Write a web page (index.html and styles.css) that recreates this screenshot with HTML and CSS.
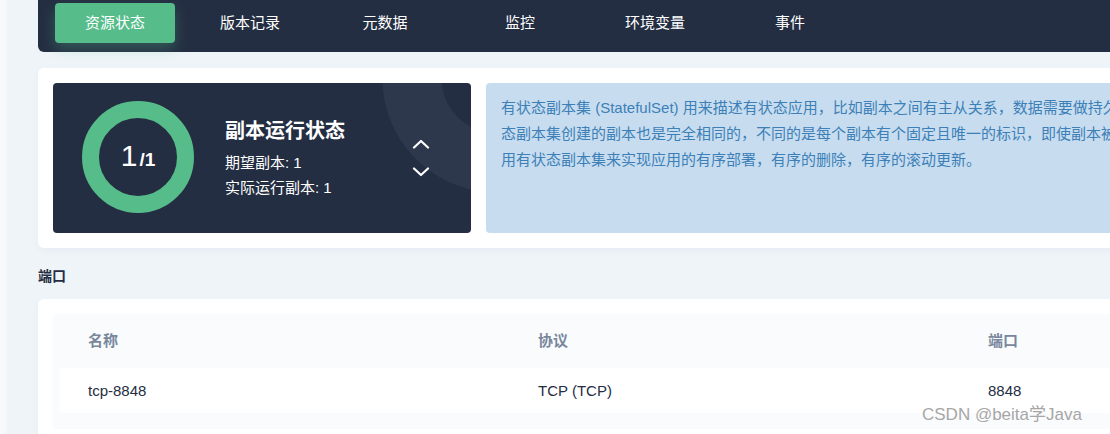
FILE: index.html
```html
<!DOCTYPE html>
<html lang="zh-CN">
<head>
    <meta charset="UTF-8">
    <meta name="viewport" content="width=device-width, initial-scale=1.0">
    <title>资源状态</title>
    <link rel="stylesheet" href="styles.css">
</head>
<body>
<div class="page">
    <nav class="tabs">
        <a class="tab active">资源状态</a>
        <a class="tab">版本记录</a>
        <a class="tab">元数据</a>
        <a class="tab">监控</a>
        <a class="tab">环境变量</a>
        <a class="tab">事件</a>
    </nav>

    <section class="card status-card">
        <div class="replica">
            <div class="ring">
                <span class="ring-cur">1</span><span class="ring-total">/1</span>
            </div>
            <div class="replica-info">
                <h3>副本运行状态</h3>
                <p>期望副本: 1</p>
                <p>实际运行副本: 1</p>
            </div>
            <div class="arrows">
                <svg width="18" height="10" viewBox="0 0 18 10"><path d="M2 8.5 L9 2 L16 8.5" fill="none" stroke="#fff" stroke-width="2.2" stroke-linecap="round" stroke-linejoin="round"/></svg>
                <svg width="18" height="10" viewBox="0 0 18 10"><path d="M2 1.5 L9 8 L16 1.5" fill="none" stroke="#fff" stroke-width="2.2" stroke-linecap="round" stroke-linejoin="round"/></svg>
            </div>
        </div>
        <div class="desc">
            <p>有状态副本集 (StatefulSet) 用来描述有状态应用，比如副本之间有主从关系，数据需要做持久化。与无状态副本集一样，有状</p>
            <p>态副本集创建的副本也是完全相同的，不同的是每个副本有个固定且唯一的标识，即使副本被重新调度了，标识也不会变化。您可以</p>
            <p>用有状态副本集来实现应用的有序部署，有序的删除，有序的滚动更新。</p>
        </div>
    </section>

    <h4 class="section-title">端口</h4>

    <section class="card ports-card">
        <div class="ports">
            <div class="row row-head">
                <span>名称</span>
                <span>协议</span>
                <span>端口</span>
            </div>
            <div class="row row-body">
                <span>tcp-8848</span>
                <span>TCP (TCP)</span>
                <span>8848</span>
            </div>
        </div>
    </section>
</div>

<div class="watermark">CSDN @beita学Java</div>
</body>
</html>
```

FILE: styles.css
```css
html, body {
    width: 100%;
    height: 100%;
}

body {
    margin: 0;
    padding: 0;
    overflow: hidden;
    background: linear-gradient(to right, #f7f9fb 0, #f7f9fb 5px, #eff4f9 8px);
    font-family: "Liberation Sans", "Noto Sans CJK SC", sans-serif;
    color: #242e42;
}

.page {
    width: 1110px;
    margin-left: 38px;
}

/* 顶部标签 */
.tabs {
    display: flex;
    gap: 15px;
    height: 52px;
    padding: 3px 0 0 17px;
    box-sizing: border-box;
    background-color: #242e42;
    border-radius: 0 0 0 6px;
}

.tab {
    width: 120px;
    height: 40px;
    line-height: 40px;
    text-align: center;
    font-size: 15px;
    color: #fff;
    border-radius: 4px;
}

.tab.active {
    background-color: #55bc8a;
    box-shadow: 0 6px 14px rgba(85, 188, 138, 0.3);
}

.card {
    background-color: #fff;
    border-radius: 6px;
    padding: 15px;
    box-shadow: 0 4px 8px rgba(36, 46, 66, 0.03);
}

.status-card {
    display: flex;
    gap: 15px;
    margin-top: 16px;
}

/* 副本状态 */
.replica {
    display: flex;
    align-items: center;
    flex: 0 0 418px;
    height: 150px;
    box-sizing: border-box;
    padding: 0 41px 0 29px;
    border-radius: 4px;
    background: radial-gradient(circle at 444px -5px, #242e42 55px, #2d384c 56px, #2d384c 114px, #242e42 115px);
    color: #fff;
}

.ring {
    width: 112px;
    height: 112px;
    box-sizing: border-box;
    border: 17px solid #55bc8a;
    border-radius: 50%;
    display: flex;
    align-items: baseline;
    justify-content: center;
    padding-top: 18px;
    margin-top: -3px;
}

.ring-cur {
    font-size: 30px;
    line-height: 40px;
}

.ring-total {
    font-size: 19px;
    font-weight: bold;
    margin-left: 2px;
}

.replica-info {
    margin-left: 31px;
}

.replica-info h3 {
    margin: 0 0 5px;
    font-size: 20px;
    line-height: 28px;
    font-weight: bold;
}

.replica-info p {
    margin: 0;
    font-size: 15px;
    line-height: 25px;
}

.arrows {
    margin-left: auto;
    display: flex;
    flex-direction: column;
    gap: 18px;
}

.arrows svg {
    display: block;
}

/* 说明 */
.desc {
    flex: 1;
    min-width: 0;
    height: 150px;
    box-sizing: border-box;
    padding: 12px 0 0 15px;
    border-radius: 4px;
    background-color: #c7ddef;
    color: #3d80b8;
    overflow: hidden;
}

.desc p {
    margin: 0;
    font-size: 15px;
    line-height: 26px;
    white-space: nowrap;
}

.section-title {
    margin: 0;
    padding: 18px 0 12px;
    font-size: 14px;
    line-height: 21px;
    font-weight: bold;
}

/* 端口表 */
.ports {
    background-color: #f9fbfd;
    border-radius: 4px;
    padding: 0 6px 16px;
    overflow: hidden;
}

.row {
    display: flex;
    font-size: 15px;
}

.row span {
    flex: 0 0 450px;
    padding-left: 29px;
    box-sizing: border-box;
}

.row-head {
    height: 54px;
    line-height: 54px;
    color: #79879c;
    font-weight: bold;
}

.row-body {
    height: 45px;
    line-height: 45px;
    background-color: #fff;
    border-radius: 4px;
    color: #242e42;
}

.watermark {
    position: absolute;
    left: 922px;
    top: 404px;
    font-size: 17px;
    line-height: 22px;
    color: #a6a6a6;
    text-shadow: 0 0 2px #fff;
}
```
